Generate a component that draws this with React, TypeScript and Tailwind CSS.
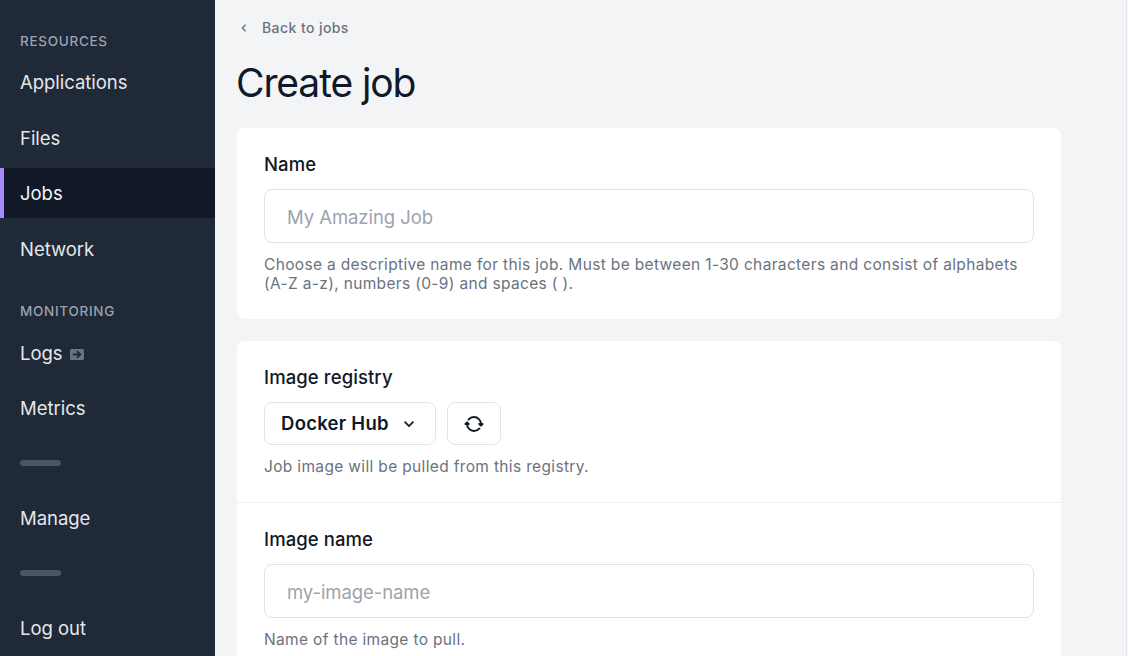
import type { ReactNode } from "react";

function NavItem({ label, active = false, children }: { label: string; active?: boolean; children?: ReactNode }) {
  return (
    <a
      className={
        active
          ? "flex h-[50px] items-center border-l-4 border-[#a78bfa] bg-[#111827] pt-[2px] pl-4 text-[18.5px] tracking-[-0.03px] text-gray-100"
          : "flex h-[50px] items-center pt-[2px] pl-5 text-[18.5px] tracking-[-0.03px] text-[#e5e7eb]"
      }
    >
      {label}
      {children}
    </a>
  );
}

function NavHeading({ children }: { children: ReactNode }) {
  return <h2 className="pl-5 text-[13.5px] leading-4 font-medium tracking-[0.7px] text-[#9ca3af]">{children}</h2>;
}

function Divider() {
  return <div className="ml-5 h-[6px] w-[41px] rounded-full bg-[#4b5563]" />;
}

function Label({ children }: { children: ReactNode }) {
  return <label className="block text-[18.5px] leading-6 font-medium tracking-[0.09px] text-[#111827]">{children}</label>;
}

function TextInput({ placeholder }: { placeholder: string }) {
  return (
    <input
      placeholder={placeholder}
      className="mt-[13px] block h-[54px] w-full rounded-[8px] border border-[#e0e3e8] bg-white px-[22px] pt-[2px] text-[18.5px] tracking-[-0.07px] placeholder:text-[#9ca3af]"
    />
  );
}

function Help({ children }: { children: ReactNode }) {
  return <p className="text-[15.5px] leading-[19px] tracking-[0.34px] whitespace-nowrap text-[#6b7280]">{children}</p>;
}

function SyncIcon() {
  return (
    <svg
      className="h-[20px] w-[20px]"
      viewBox="0 0 512 512"
      fill="none"
      stroke="currentColor"
      strokeWidth="48"
      strokeLinecap="round"
      strokeLinejoin="round"
    >
      <path d="M434.67 285.59v-29.8c0-98.73-80.24-178.79-179.2-178.79a179 179 0 0 0-140.14 67.36m-38.53 82v29.8C76.8 355 157 435 256 435a180.45 180.45 0 0 0 140-66.92" />
      <path d="m36 256 42-42 44 42ZM476 256l-42 42-44-42Z" fill="currentColor" />
    </svg>
  );
}

export default function App() {
  return (
    <div className="flex h-[656px] w-[1128px] overflow-hidden bg-[#f3f4f6] font-['Inter',sans-serif]">
      <nav className="w-[215px] shrink-0 bg-[#1f2937] pt-[33px]">
        <NavHeading>RESOURCES</NavHeading>
        <div className="mt-2 flex flex-col gap-[5.6px]">
          <NavItem label="Applications" />
          <NavItem label="Files" />
          <NavItem label="Jobs" active />
          <NavItem label="Network" />
        </div>
        <div className="mt-[29.7px]">
          <NavHeading>MONITORING</NavHeading>
        </div>
        <div className="mt-2 flex flex-col gap-[5.5px]">
          <NavItem label="Logs">
            <svg className="mt-[2px] ml-[7px] h-[11px] w-[14px]" viewBox="0 0 14 11">
              <rect width="14" height="11" rx="1.6" fill="#6b7280" />
              <path d="M2.8 5.5H10M7 2.2l3.3 3.3L7 8.8" fill="none" stroke="#1f2937" strokeWidth="1.8" />
            </svg>
          </NavItem>
          <NavItem label="Metrics" />
        </div>
        <div className="mt-[27px]">
          <Divider />
        </div>
        <div className="mt-[26.5px]">
          <NavItem label="Manage" />
        </div>
        <div className="mt-[27.5px]">
          <Divider />
        </div>
        <div className="mt-[26.5px]">
          <NavItem label="Log out" />
        </div>
      </nav>
      <main className="min-w-0 flex-1 pt-[18px] pl-[22px]">
        <a className="flex h-5 items-center pl-1 text-[14px] font-medium tracking-[0.42px] text-[#6b7280]">
          <svg className="mr-[15px] h-[8px] w-[6px]" viewBox="0 0 6 8" fill="none" stroke="currentColor" strokeWidth="1.4">
            <path d="M4.6 .8 1.4 4l3.2 3.2" />
          </svg>
          <span className="pb-[2px]">Back to jobs</span>
        </a>
        <h1 className="-ml-px mt-[21px] text-[39px] leading-[48px] tracking-[-1.1px] text-[#111827]">Create job</h1>
        <section className="mt-[21px] h-[191px] w-[824px] rounded-[8px] bg-white px-[27px] pt-6">
          <Label>Name</Label>
          <TextInput placeholder="My Amazing Job" />
          <div className="mt-3">
            <Help>
              Choose a descriptive name for this job. Must be between 1-30 characters and consist of alphabets
              <br />
              (A-Z a-z), numbers (0-9) and spaces ( ).
            </Help>
          </div>
        </section>
        <section className="mt-[22px] w-[824px] rounded-t-[8px] bg-white">
          <div className="h-[162px] border-b border-[#edeff2] px-[27px] pt-6">
            <Label>Image registry</Label>
            <div className="mt-[13px] flex gap-[11px]">
              <button className="flex h-[43px] w-[172px] items-center rounded-[8px] border border-[#e0e3e8] pl-4 text-[18.5px] font-semibold tracking-[0.27px] text-[#111827]">
                <span className="pt-px">Docker Hub</span>
                <svg className="ml-[14px] h-[8px] w-[12px]" viewBox="0 0 12 8" fill="none" stroke="currentColor" strokeWidth="1.7">
                  <path d="m1.6 1.7 4.4 4.4 4.4-4.4" />
                </svg>
              </button>
              <button className="flex h-[43px] w-[54px] items-center justify-center rounded-[8px] border border-[#e0e3e8] text-[#111827]">
                <SyncIcon />
              </button>
            </div>
            <div className="mt-3">
              <Help>Job image will be pulled from this registry.</Help>
            </div>
          </div>
          <div className="h-[180px] px-[27px] pt-6">
            <Label>Image name</Label>
            <TextInput placeholder="my-image-name" />
            <div className="mt-3">
              <Help>Name of the image to pull.</Help>
            </div>
          </div>
        </section>
      </main>
      <div className="w-[2px] shrink-0 border-l border-[#e2e4e8] bg-[#f6f7f8]" />
    </div>
  );
}
